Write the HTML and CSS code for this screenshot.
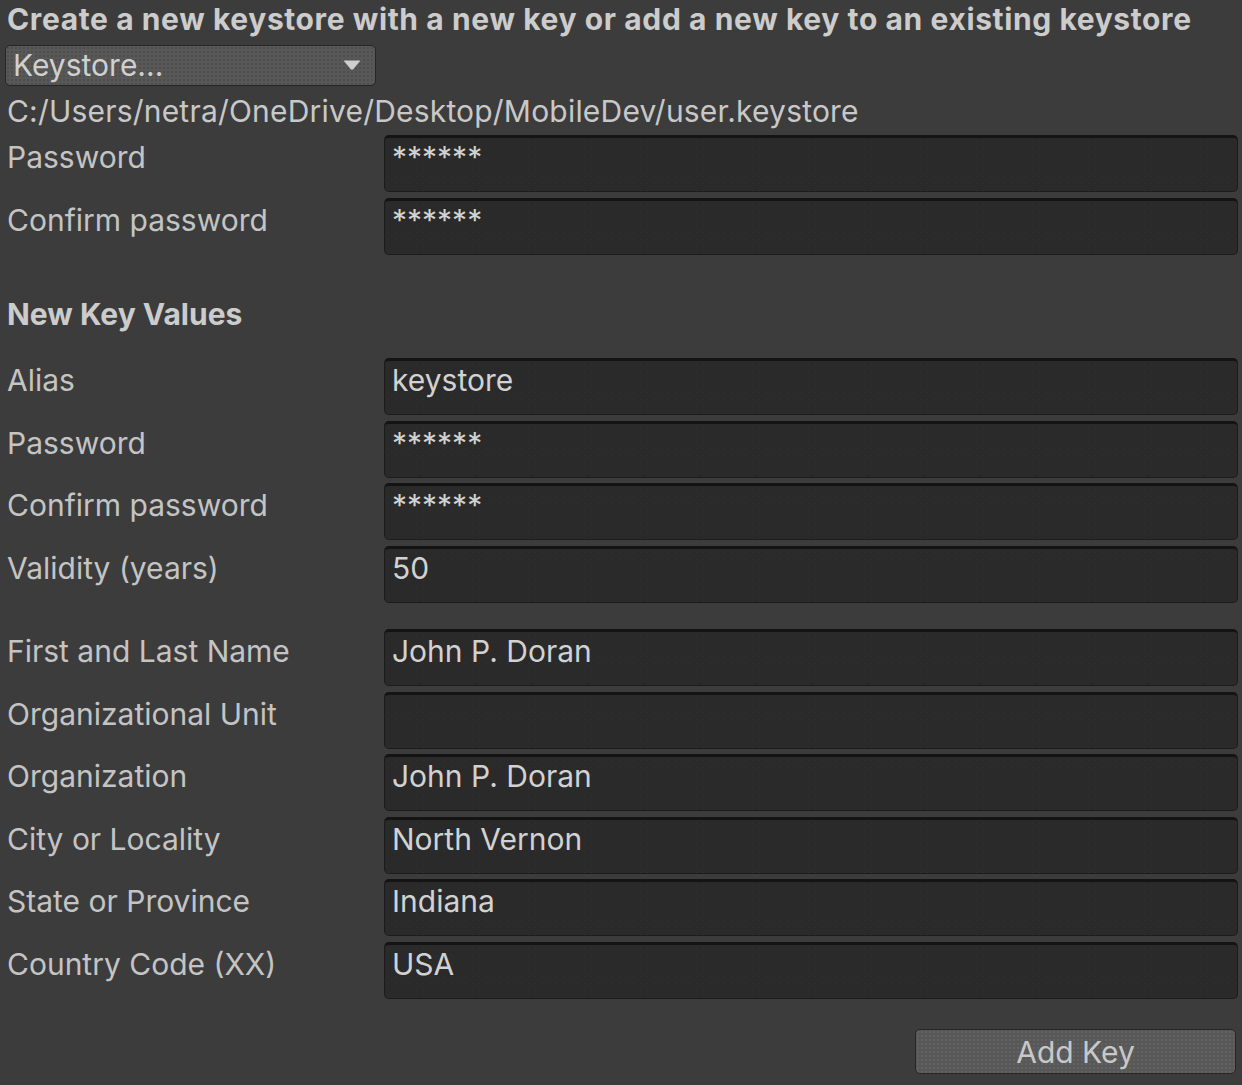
FILE: index.html
```html
<!DOCTYPE html>
<html>
<head>
<meta charset="utf-8">
<link rel="stylesheet" href="styles.css">
</head>
<body>
<div class="panel">
  <div class="title">Create a new keystore with a new key or add a new key to an existing keystore</div>
  <div class="dropdown">
    <span>Keystore...</span>
    <svg class="arrow" width="18" height="10" viewBox="0 0 18 10"><polygon points="0.5,0.5 17.5,0.5 10,9.5 8,9.5" fill="#cfcfcf"/></svg>
  </div>
  <div class="path">C:/Users/netra/OneDrive/Desktop/MobileDev/user.keystore</div>

  <div class="rows first">
    <div class="row"><div class="label">Password</div><div class="field pw">******</div></div>
    <div class="row"><div class="label">Confirm password</div><div class="field pw">******</div></div>
  </div>

  <div class="section">New Key Values</div>

  <div class="rows">
    <div class="row"><div class="label">Alias</div><div class="field">keystore</div></div>
    <div class="row"><div class="label">Password</div><div class="field pw">******</div></div>
    <div class="row"><div class="label">Confirm password</div><div class="field pw">******</div></div>
    <div class="row"><div class="label">Validity (years)</div><div class="field">50</div></div>
  </div>

  <div class="rows group2">
    <div class="row"><div class="label">First and Last Name</div><div class="field">John P. Doran</div></div>
    <div class="row"><div class="label">Organizational Unit</div><div class="field"></div></div>
    <div class="row"><div class="label">Organization</div><div class="field">John P. Doran</div></div>
    <div class="row"><div class="label">City or Locality</div><div class="field">North Vernon</div></div>
    <div class="row"><div class="label">State or Province</div><div class="field">Indiana</div></div>
    <div class="row"><div class="label">Country Code (XX)</div><div class="field">USA</div></div>
  </div>

  <div class="actions">
    <div class="button">Add Key</div>
  </div>
</div>
</body>
</html>
```
FILE: styles.css
```css
html, body {
  margin: 0;
  padding: 0;
  background: #3c3c3c;
}
body {
  width: 1242px;
  height: 1085px;
  overflow: hidden;
  font-family: Inter, "Noto Sans", sans-serif;
  font-size: 30px;
  color: #c4c4c4;
}
.panel {
  padding: 0 4px 0 7px;
}
.title {
  font-weight: 700;
  line-height: 38px;
  letter-spacing: 0.6px;
  color: #cccccc;
  white-space: nowrap;
}
.dropdown {
  margin: 7px 0 0 -2px;
  box-sizing: border-box;
  width: 371px;
  height: 41px;
  background-color: #585858;
  background-image: radial-gradient(circle, rgba(0,0,0,0.12) 0.7px, transparent 1px);
  background-size: 4px 4px;
  border: 1px solid #262626;
  border-radius: 5px;
  display: flex;
  align-items: center;
  justify-content: space-between;
  padding: 0 14px 0 7px;
  color: #d0d0d0;
}
.dropdown span {
  line-height: 36px;
  margin-top: -1px;
}
.arrow {
  margin-top: -2px;
}
.path {
  line-height: 36px;
  margin-top: 7px;
  letter-spacing: 0.2px;
  color: #c8c8c8;
}
.rows {
  display: flex;
  flex-direction: column;
  gap: 5.5px;
}
.rows.first {
  margin-top: 6px;
}
.row {
  display: flex;
  height: 57px;
}
.label {
  width: 377px;
  flex: none;
  line-height: 36px;
  padding-top: 4px;
  color: #c4c4c4;
}
.field {
  flex: 1;
  background-color: #2a2a2a;
  background-image: radial-gradient(circle, rgba(255,255,255,0.03) 0.7px, transparent 0.9px);
  background-size: 7px 7px;
  border: 1px solid #1c1c1c;
  border-top: 3px solid #141414;
  border-radius: 5px;
  box-sizing: border-box;
  padding: 1px 0 0 7px;
  line-height: 36px;
  color: #d2d2d2;
  white-space: nowrap;
}
.section {
  margin-top: 41.5px;
  margin-bottom: 26px;
  font-weight: 700;
  line-height: 36px;
  color: #cccccc;
}
.group2 {
  margin-top: 26.5px;
}
.actions {
  display: flex;
  justify-content: flex-end;
  margin-top: 30.5px;
  padding-right: 2px;
}
.button {
  width: 321px;
  height: 45px;
  box-sizing: border-box;
  background-color: #585858;
  background-image: radial-gradient(circle, rgba(255,255,255,0.06) 0.7px, transparent 1px);
  background-size: 4px 4px;
  border: 1px solid #262626;
  border-radius: 5px;
  display: flex;
  align-items: center;
  justify-content: center;
  line-height: 36px;
  color: #c8c8c8;
}
```
